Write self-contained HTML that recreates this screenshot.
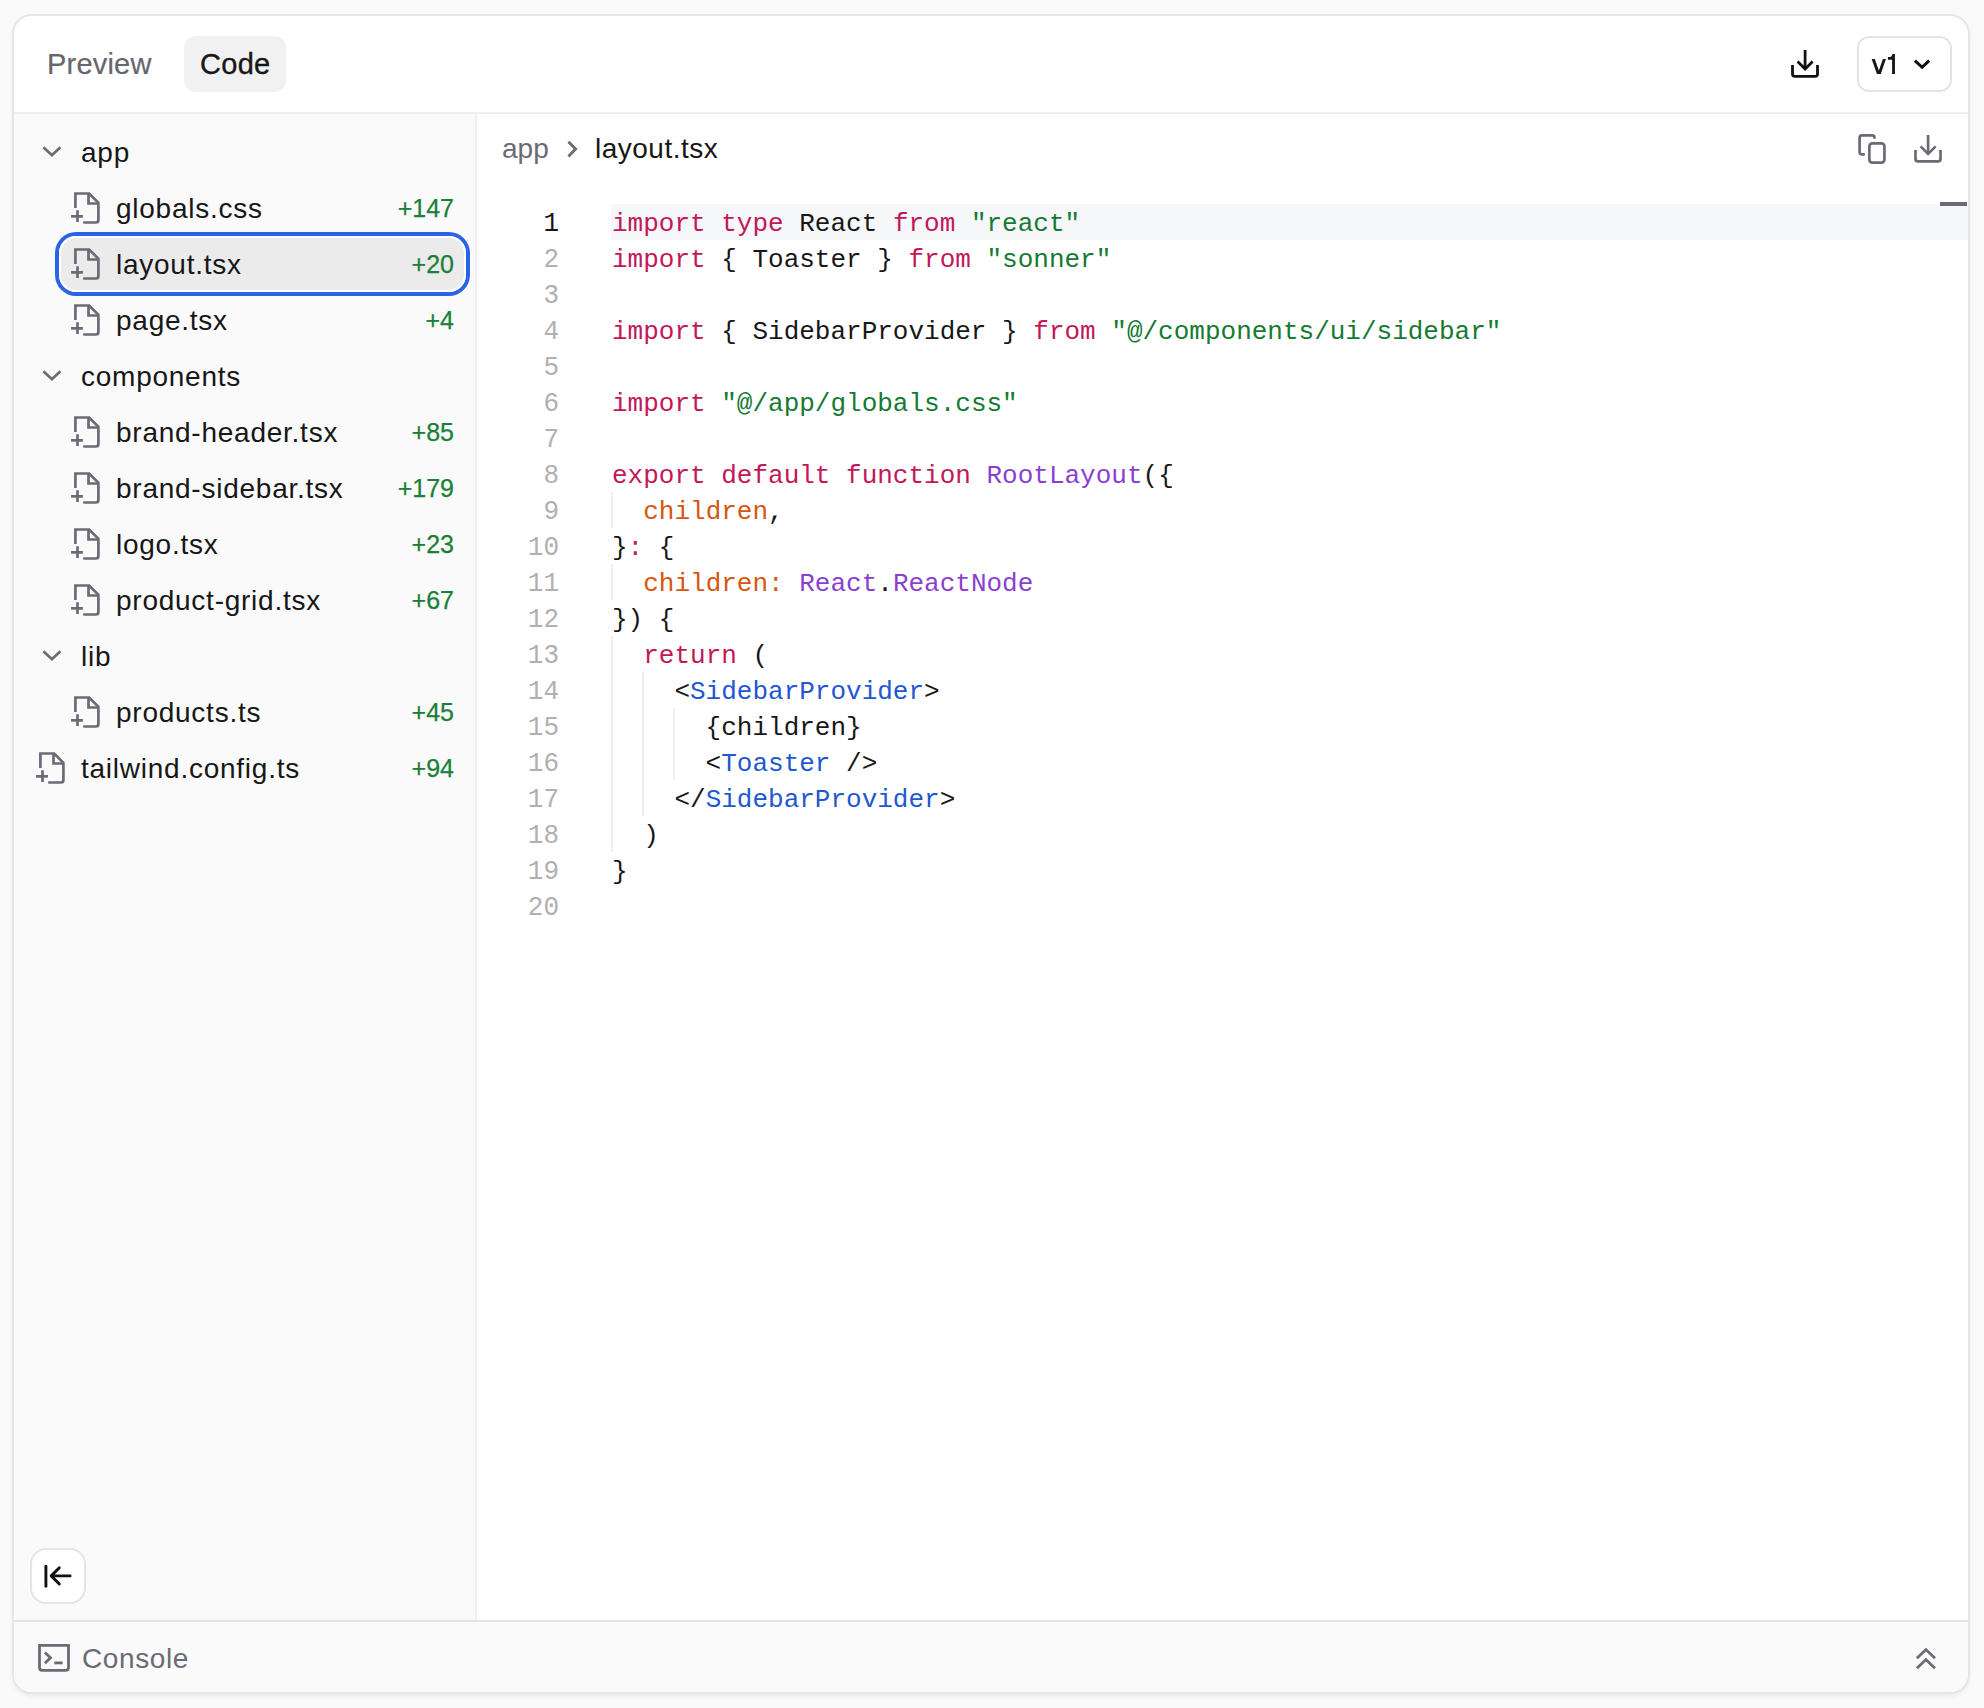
<!DOCTYPE html>
<html><head><meta charset="utf-8">
<style>
*{box-sizing:border-box;margin:0;padding:0}
html,body{width:1984px;height:1708px;overflow:hidden;background:#fafafa;font-family:"Liberation Sans",sans-serif;color:#171717}
.abs{position:absolute}
#card{position:absolute;left:12px;top:14px;width:1958px;height:1680px;border:2px solid #e6e6e6;border-radius:20px;background:#fff;overflow:hidden;box-shadow:0 3px 5px -1px rgba(0,0,0,0.07)}
svg{position:absolute;left:0;top:0;overflow:visible}
.t{position:absolute;white-space:pre;font-size:28px;line-height:56px}
.cnt{position:absolute;white-space:pre;font-size:25px;-webkit-text-stroke:0.25px #1a7f37;line-height:56px;color:#1a7f37;text-align:right}
.code{position:absolute;font-family:"Liberation Mono",monospace;font-size:26px;line-height:36px;white-space:pre}
.ln{position:absolute;font-family:"Liberation Mono",monospace;font-size:26px;line-height:36px;white-space:pre;text-align:right;color:#b0b0b0;transform:scaleY(1.08);transform-origin:0 25px}
.st{letter-spacing:0.75px}
.k{color:#c2185b}.s{color:#157a33}.f{color:#8b3fd0}.p{color:#d6570f}.j{color:#2158d0}
</style></head><body>
<div id="card"></div>
<!-- all positions absolute in page coordinates -->
<div class="abs" style="left:14px;top:112px;width:1954px;height:2px;background:#efeff1"></div>
<!-- sidebar -->
<div class="abs" style="left:14px;top:114px;width:461px;height:1506px;background:#fafafa"></div>
<div class="abs" style="left:475px;top:114px;width:2px;height:1506px;background:#f0f0f0"></div>
<!-- console bar -->
<div class="abs" style="left:14px;top:1620px;width:1954px;height:2px;background:#e2e2e2"></div>
<div class="abs" style="left:14px;top:1622px;width:1954px;height:70px;background:#fafafa;border-radius:0 0 18px 18px"></div>

<!-- header tabs -->
<div class="abs" style="left:184px;top:36px;width:102px;height:56px;background:#f1f1f1;border-radius:12px"></div>
<div class="t" style="left:47px;top:36px;font-size:29px;color:#66666f;letter-spacing:0.2px;-webkit-text-stroke:0.2px #66666f">Preview</div>
<div class="t" style="left:200px;top:36px;font-size:29px;color:#171717;letter-spacing:0.3px;-webkit-text-stroke:0.35px #171717">Code</div>

<!-- v1 button -->
<div class="abs" style="left:1857px;top:36px;width:95px;height:56px;border:2px solid #e4e4e4;border-radius:12px;background:#fff"></div>
<svg width="1984" height="1708" viewBox="0 0 1984 1708"><path fill="#171717" d="M1871.65 59.1H1874.8L1878.85 70.6L1882.9 59.1H1885.9L1880.8 73.9H1876.9Z"/><path fill="#171717" d="M1887.9 56.9H1889.6Q1892.1 56.9 1892.4 54H1894.95V73.9H1892.1V59.7H1887.9Z"/></svg>

<svg width="1984" height="1708" viewBox="0 0 1984 1708" fill="none" stroke-linecap="butt" stroke-linejoin="miter">
  <!-- header download -->
  <g stroke="#111" stroke-width="2.8">
    <path d="M1792.5 65.1V74Q1792.5 76.4 1794.9 76.4H1815.1Q1817.5 76.4 1817.5 74V65.1"/>
    <path d="M1805.1 50V68"/>
    <path d="M1797.6 61.4L1805.1 68.9L1812.6 61.4"/>
    <!-- v1 chevron -->
    <path d="M1914.9 60.7L1922.1 67.3L1929.2 60.7" stroke-width="3"/>
  </g>
  <!-- code toolbar icons -->
  <g stroke="#6b6b76" stroke-width="2.7">
    <path d="M1864.8 154.3H1862Q1859.6 154.3 1859.6 152V137.8Q1859.6 135.4 1862 135.4H1872.1Q1874.5 135.4 1874.5 137.8V138.7"/>
    <rect x="1869.35" y="143.45" width="15.1" height="19.1" rx="3"/>
    <path d="M1915.5 150.1V159Q1915.5 161.4 1917.9 161.4H1938.1Q1940.5 161.4 1940.5 159V150.1"/>
    <path d="M1928.1 135V153"/>
    <path d="M1920.6 146.4L1928.1 153.9L1935.6 146.4"/>
    <!-- breadcrumb chevron -->
    <path d="M568.4 141.8L575.6 149.1L568.4 156.4" stroke-width="2.9"/>
  </g>
</svg>

<!-- breadcrumb -->
<div class="t" style="left:502px;top:121px;color:#6b6b76">app</div>
<div class="t" style="left:595px;top:121px;color:#171717;letter-spacing:0.5px">layout.tsx</div>


<!-- selected row -->
<div class="abs" style="left:59px;top:236px;width:407px;height:56px;background:#ebebeb;border-radius:17px;box-shadow:inset 0 0 0 2px #fff,0 0 0 4px #2b63e6"></div>
<div class="t st" style="left:81px;top:125px">app</div>
<div class="t st" style="left:116px;top:181px">globals.css</div>
<div class="cnt" style="right:1530px;top:180px">+147</div>
<div class="t st" style="left:116px;top:237px">layout.tsx</div>
<div class="cnt" style="right:1530px;top:236px">+20</div>
<div class="t st" style="left:116px;top:293px">page.tsx</div>
<div class="cnt" style="right:1530px;top:292px">+4</div>
<div class="t st" style="left:81px;top:349px">components</div>
<div class="t st" style="left:116px;top:405px">brand-header.tsx</div>
<div class="cnt" style="right:1530px;top:404px">+85</div>
<div class="t st" style="left:116px;top:461px">brand-sidebar.tsx</div>
<div class="cnt" style="right:1530px;top:460px">+179</div>
<div class="t st" style="left:116px;top:517px">logo.tsx</div>
<div class="cnt" style="right:1530px;top:516px">+23</div>
<div class="t st" style="left:116px;top:573px">product-grid.tsx</div>
<div class="cnt" style="right:1530px;top:572px">+67</div>
<div class="t st" style="left:81px;top:629px">lib</div>
<div class="t st" style="left:116px;top:685px">products.ts</div>
<div class="cnt" style="right:1530px;top:684px">+45</div>
<div class="t st" style="left:81px;top:741px">tailwind.config.ts</div>
<div class="cnt" style="right:1530px;top:740px">+94</div>
<svg width="1984" height="1708" viewBox="0 0 1984 1708" fill="none">
 <defs>
  <g id="fp" stroke="#6b6b76" stroke-width="2.7" fill="none">
   <path d="M11.4 21.9V7.5H25.2L34.4 16.7V34Q34.4 36.5 31.9 36.5H19.2"/>
   <path d="M24.5 7.5V17.5H34.4"/>
   <path d="M7.1 30.3H18.9M13.5 24.2V35.9"/>
  </g>
 </defs>
 <g stroke="#6b6b76" stroke-width="2.8">
  <path d="M43.4 147.3L51.9 155.2L60.4 147.3"/>
  <path d="M43.4 371.3L51.9 379.2L60.4 371.3"/>
  <path d="M43.4 651.3L51.9 659.2L60.4 651.3"/>
 </g>
 <use href="#fp" x="64" y="186"/>
 <use href="#fp" x="64" y="242"/>
 <use href="#fp" x="64" y="298"/>
 <use href="#fp" x="64" y="410"/>
 <use href="#fp" x="64" y="466"/>
 <use href="#fp" x="64" y="522"/>
 <use href="#fp" x="64" y="578"/>
 <use href="#fp" x="64" y="690"/>
 <use href="#fp" x="29" y="746"/>
</svg>
<!-- code -->
<div class="abs" style="left:611px;top:204px;width:1357px;height:36px;background:#f6f7f9"></div>
<div class="abs" style="left:1940px;top:202px;width:27px;height:4px;background:#6b6b76"></div>
<div class="abs" style="left:611px;top:492px;width:2px;height:36px;background:#efefef"></div>
<div class="abs" style="left:611px;top:564px;width:2px;height:36px;background:#efefef"></div>
<div class="abs" style="left:611px;top:636px;width:2px;height:216px;background:#efefef"></div>
<div class="abs" style="left:642px;top:672px;width:2px;height:144px;background:#efefef"></div>
<div class="abs" style="left:673px;top:708px;width:2px;height:72px;background:#efefef"></div>
<div class="ln" style="color:#171717;right:1425px;top:206px">1</div>
<div class="code" style="left:612px;top:206px"><span class="k">import</span> <span class="k">type</span> React <span class="k">from</span> <span class="s">"react"</span></div>
<div class="ln" style="right:1425px;top:242px">2</div>
<div class="code" style="left:612px;top:242px"><span class="k">import</span> { Toaster } <span class="k">from</span> <span class="s">"sonner"</span></div>
<div class="ln" style="right:1425px;top:278px">3</div>
<div class="ln" style="right:1425px;top:314px">4</div>
<div class="code" style="left:612px;top:314px"><span class="k">import</span> { SidebarProvider } <span class="k">from</span> <span class="s">"@/components/ui/sidebar"</span></div>
<div class="ln" style="right:1425px;top:350px">5</div>
<div class="ln" style="right:1425px;top:386px">6</div>
<div class="code" style="left:612px;top:386px"><span class="k">import</span> <span class="s">"@/app/globals.css"</span></div>
<div class="ln" style="right:1425px;top:422px">7</div>
<div class="ln" style="right:1425px;top:458px">8</div>
<div class="code" style="left:612px;top:458px"><span class="k">export</span> <span class="k">default</span> <span class="k">function</span> <span class="f">RootLayout</span>({</div>
<div class="ln" style="right:1425px;top:494px">9</div>
<div class="code" style="left:612px;top:494px">  <span class="p">children</span>,</div>
<div class="ln" style="right:1425px;top:530px">10</div>
<div class="code" style="left:612px;top:530px">}<span class="k">:</span> {</div>
<div class="ln" style="right:1425px;top:566px">11</div>
<div class="code" style="left:612px;top:566px">  <span class="p">children:</span> <span class="f">React</span>.<span class="f">ReactNode</span></div>
<div class="ln" style="right:1425px;top:602px">12</div>
<div class="code" style="left:612px;top:602px">}) {</div>
<div class="ln" style="right:1425px;top:638px">13</div>
<div class="code" style="left:612px;top:638px">  <span class="k">return</span> (</div>
<div class="ln" style="right:1425px;top:674px">14</div>
<div class="code" style="left:612px;top:674px">    &lt;<span class="j">SidebarProvider</span>&gt;</div>
<div class="ln" style="right:1425px;top:710px">15</div>
<div class="code" style="left:612px;top:710px">      {children}</div>
<div class="ln" style="right:1425px;top:746px">16</div>
<div class="code" style="left:612px;top:746px">      &lt;<span class="j">Toaster</span> /&gt;</div>
<div class="ln" style="right:1425px;top:782px">17</div>
<div class="code" style="left:612px;top:782px">    &lt;/<span class="j">SidebarProvider</span>&gt;</div>
<div class="ln" style="right:1425px;top:818px">18</div>
<div class="code" style="left:612px;top:818px">  )</div>
<div class="ln" style="right:1425px;top:854px">19</div>
<div class="code" style="left:612px;top:854px">}</div>
<div class="ln" style="right:1425px;top:890px">20</div>
<!-- bottom -->
<div class="abs" style="left:30px;top:1548px;width:56px;height:56px;border:2px solid #e4e4e4;border-radius:16px;background:#fff"></div>
<div class="t" style="left:82px;top:1631px;letter-spacing:0.6px;color:#6b6b76">Console</div>
<svg width="1984" height="1708" viewBox="0 0 1984 1708" fill="none">
 <g stroke="#111" stroke-width="2.9" stroke-linecap="round" stroke-linejoin="round">
  <path d="M45.9 1566.2V1586.2"/>
  <path d="M51.5 1575.9H70.1M59.3 1567.8L51.2 1575.9L59.3 1584"/>
 </g>
 <g stroke="#6b6b76" stroke-width="2.8">
  <path d="M39.5 1645.4H68.5V1667.5Q68.5 1670.3 65.7 1670.3H42.3Q39.5 1670.3 39.5 1667.5Z"/>
  <path d="M44.9 1652.4L50.5 1657.8L44.9 1663.2"/>
  <path d="M54.3 1662.9H62.6"/>
  <path d="M1916.9 1658.2L1925.9 1649.6L1935 1658.2M1916.9 1668.2L1925.9 1659.6L1935 1668.2"/>
 </g>
</svg>

</body></html>
